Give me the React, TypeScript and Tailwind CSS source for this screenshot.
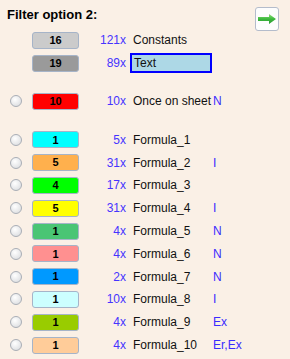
import React from "react";

type Row = {
  num: string;
  color: string;
  count: string;
  name: string;
  flag?: string;
};

const formulas: Row[] = [
  { num: "1", color: "bg-[#00ffff]", count: "5x", name: "Formula_1" },
  { num: "5", color: "bg-[#ffb04d]", count: "31x", name: "Formula_2", flag: "I" },
  { num: "4", color: "bg-[#00ff00]", count: "17x", name: "Formula_3" },
  { num: "5", color: "bg-[#ffff00]", count: "31x", name: "Formula_4", flag: "I" },
  { num: "1", color: "bg-[#4ac574]", count: "4x", name: "Formula_5", flag: "N" },
  { num: "1", color: "bg-[#ff9090]", count: "4x", name: "Formula_6", flag: "N" },
  { num: "1", color: "bg-[#0099ff]", count: "2x", name: "Formula_7", flag: "N" },
  { num: "1", color: "bg-[#ccffff]", count: "10x", name: "Formula_8", flag: "I" },
  { num: "1", color: "bg-[#99cc00]", count: "4x", name: "Formula_9", flag: "Ex" },
  { num: "1", color: "bg-[#ffcc99]", count: "4x", name: "Formula_10", flag: "Er,Ex" },
];

function Radio() {
  return (
    <div className="w-[12px] h-[12px] rounded-full border border-[#a9aeb6] bg-[radial-gradient(circle_at_40%_35%,#ffffff,#d6d8db)]" />
  );
}

function Swatch({ num, color }: { num: string; color: string }) {
  return (
    <div
      className={`w-[47px] h-[17px] rounded-[3px] border border-[#a6b4c8] flex items-center justify-center text-[11px] font-bold text-black ${color}`}
    >
      {num}
    </div>
  );
}

function FilterRow({ row, radio, h = "h-[22.8px]" }: { row: Row; radio: boolean; h?: string }) {
  return (
    <div className={`flex items-center ${h}`}>
      <div className="w-[12px] ml-[10px] flex justify-center">{radio && <Radio />}</div>
      <div className="ml-[10px]">
        <Swatch num={row.num} color={row.color} />
      </div>
      <div className="w-[47px] text-right text-[#4634ff]">{row.count}</div>
      <div className="w-[87px] pl-[7px] text-[#111] whitespace-nowrap">{row.name}</div>
      <div className="text-[#3a2cff]">{row.flag}</div>
    </div>
  );
}

function ArrowButton() {
  return (
    <button className="w-[24px] h-[24px] mt-[7px] mr-[11px] rounded-[3px] border border-[#b4bccb] bg-[#fdfdfd] flex items-center justify-center">
      <svg width="20" height="12" viewBox="0 0 20 12">
        <defs>
          <linearGradient id="ag" x1="0" y1="0" x2="0" y2="1">
            <stop offset="0" stopColor="#8fe07a" />
            <stop offset="0.5" stopColor="#3cb83c" />
            <stop offset="1" stopColor="#2a9a35" />
          </linearGradient>
        </defs>
        <path d="M1 4 H12 V1 L19 6 L12 11 V8 H1 Z" fill="url(#ag)" />
      </svg>
    </button>
  );
}

export default function App() {
  return (
    <div
      className="w-[290px] h-[359px] bg-[#faf0e6] text-[12px] overflow-hidden"
      style={{ fontFamily: '"Liberation Sans", Arial, sans-serif' }}
    >
      <div className="flex justify-between items-start h-[28.5px]">
        <div className="pl-[7px] pt-[5px] text-[13px] font-bold text-black">Filter option 2:</div>
        <ArrowButton />
      </div>

      <div className="flex items-center h-[23px]">
        <div className="ml-[32px]">
          <Swatch num="16" color="bg-[#cbcbcb]" />
        </div>
        <div className="w-[47px] text-right text-[#4634ff]">121x</div>
        <div className="pl-[7px] text-[#111]">Constants</div>
      </div>

      <div className="flex items-center h-[23px]">
        <div className="ml-[32px]">
          <Swatch num="19" color="bg-[#9a9a9a]" />
        </div>
        <div className="w-[47px] text-right text-[#4634ff]">89x</div>
        <div className="ml-[4px] w-[82px] h-[20px] border-2 border-[#0000ff] bg-[#add8e6] pl-[2px] flex items-center text-[#111]">
          Text
        </div>
      </div>

      <div className="mt-[15px]">
        <FilterRow
          row={{ num: "10", color: "bg-[#ff0000]", count: "10x", name: "Once on sheet", flag: "N" }}
          radio
          h="h-[23px]"
        />
      </div>

      <div className="mt-[16px]">
        {formulas.map((f) => (
          <FilterRow key={f.name} row={f} radio />
        ))}
      </div>
    </div>
  );
}
